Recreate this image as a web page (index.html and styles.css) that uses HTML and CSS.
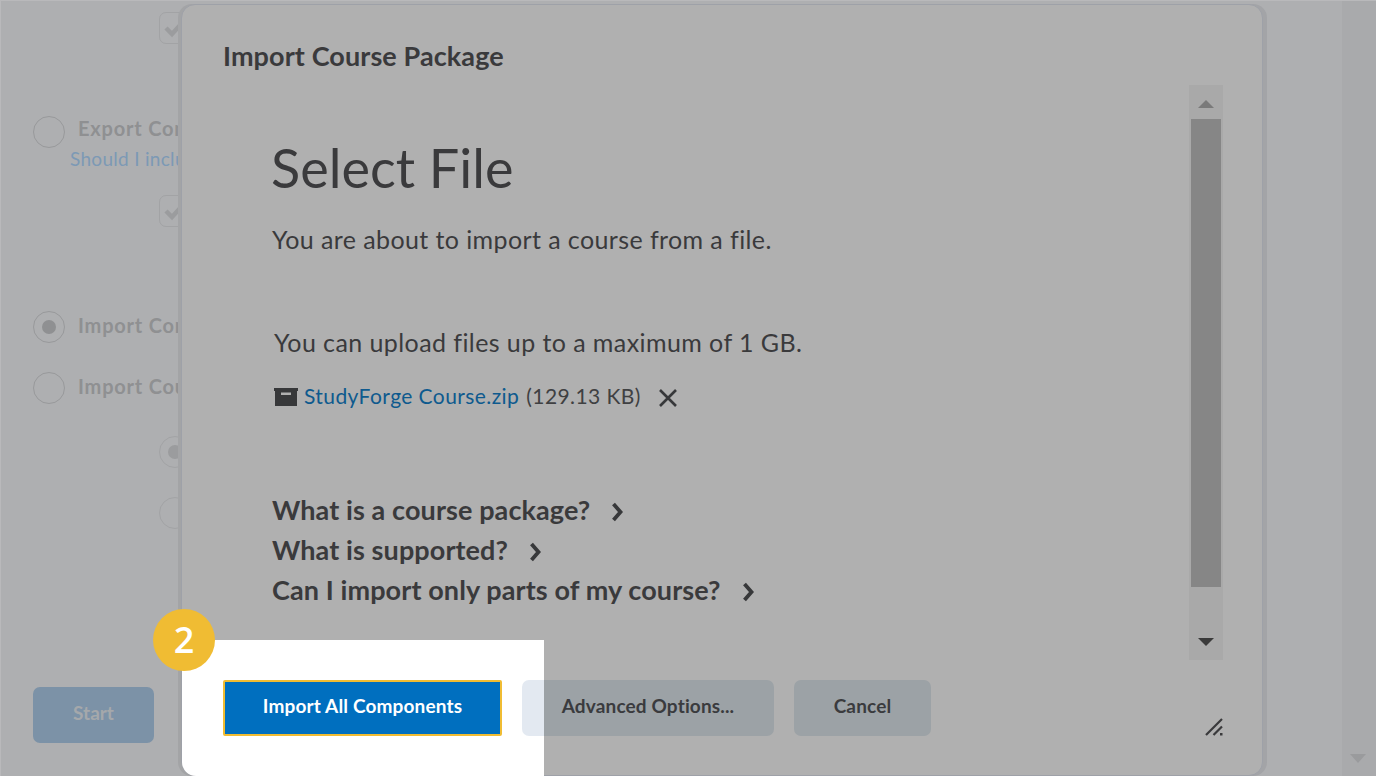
FILE: index.html
```html
<!DOCTYPE html>
<html lang="en">
<head>
<meta charset="utf-8">
<title>Import Course Package</title>
<link rel="stylesheet" href="styles.css">
</head>
<body>
<div class="page">
  <main class="under">
    <div class="check-row first"><span class="check"><svg viewBox="0 0 32 32" width="32" height="32"><path d="M7 16l6 6 11-12" fill="none" stroke="#9b9c9e" stroke-width="4.5"/></svg></span></div>
    <div class="radio-row export"><span class="radio"></span><span class="opt">Export Components</span></div>
    <a class="help">Should I include user data?</a>
    <div class="check-row second"><span class="check"><svg viewBox="0 0 32 32" width="32" height="32"><path d="M7 16l6 6 11-12" fill="none" stroke="#9b9c9e" stroke-width="4.5"/></svg></span></div>
    <div class="radio-row imp1"><span class="radio on"></span><span class="opt">Import Components</span></div>
    <div class="radio-row imp2"><span class="radio"></span><span class="opt">Import Course Package</span></div>
    <div class="sub-radio r1"><span class="radio on"></span></div>
    <div class="sub-radio r2"><span class="radio"></span></div>
    <button class="start">Start</button>
  </main>
  <div class="page-scroll"><svg class="page-arrow" viewBox="0 0 16 10" width="16" height="10"><path d="M0 0h16L8 9z" fill="#9a9b9d"/></svg></div>

  <section class="dialog">
    <div class="spot"></div>
    <h2 class="dlg-title">Import Course Package</h2>
    <div class="dlg-body">
      <div class="content">
        <h1 class="head">Select File</h1>
        <p class="intro">You are about to import a course from a file.</p>
        <p class="limit">You can upload files up to a maximum of 1 GB.</p>
        <div class="file">
          <svg class="box" viewBox="0 0 24 18" width="24" height="18"><path d="M0 0h24v3H0zM1 3h22v15H1z" fill="#37383a"/><rect x="7" y="4.500" width="10" height="2.500" fill="#b0b0b0"/></svg>
          <a class="fname">StudyForge Course.zip</a>
          <span class="fsize">(129.13 KB)</span>
          <svg class="x" viewBox="0 0 20 20" width="20" height="20"><path d="M2 2l16 16M18 2L2 18" stroke="#37383a" stroke-width="2.600" fill="none"/></svg>
        </div>
        <ul class="faq">
          <li>What is a course package?<svg viewBox="0 0 12 20" width="12" height="20"><path d="M2.500 2l7 8-7 8" fill="none" stroke="#37383a" stroke-width="3.800"/></svg></li>
          <li>What is supported?<svg viewBox="0 0 12 20" width="12" height="20"><path d="M2.500 2l7 8-7 8" fill="none" stroke="#37383a" stroke-width="3.800"/></svg></li>
          <li>Can I import only parts of my course?<svg viewBox="0 0 12 20" width="12" height="20"><path d="M2.500 2l7 8-7 8" fill="none" stroke="#37383a" stroke-width="3.800"/></svg></li>
        </ul>
      </div>
      <div class="scroll">
        <svg class="arr" viewBox="0 0 16 9" width="16" height="9"><path d="M8 0l8 8H0z" fill="#7a7a7a"/></svg>
        <div class="track"><div class="thumb"></div></div>
        <svg class="arr" viewBox="0 0 16 9" width="16" height="9"><path d="M0 0h16L8 8z" fill="#3a3a3a"/></svg>
      </div>
    </div>
    <footer class="foot">
      <button class="btn primary">Import All Components</button>
      <button class="btn adv">Advanced Options...</button>
      <button class="btn cancel">Cancel</button>
      <svg class="grip" viewBox="0 0 18 18" width="18" height="18"><path d="M1 17L17 1M8.500 17L17 8.500" stroke="#3a3a3c" stroke-width="2.200" fill="none"/><rect x="15" y="15" width="2.500" height="2.500" fill="#3a3a3c"/></svg>
    </footer>
  </section>
  <div class="badge">2</div>
</div>
</body>
</html>
```
FILE: styles.css
```css
* { box-sizing: border-box; }
html, body { margin: 0; padding: 0; }
body { font-family: Lato, "Open Sans", sans-serif; color: #3a3a3c; }
.page {
  position: relative;
  width: 1376px;
  height: 776px;
  overflow: hidden;
  background: #aeafb1;
  border-top: 1px solid #b9b9bb;
  border-left: 1px solid #b9b9bb;
  display: flex;
}
.under { flex: 1; display: flex; flex-direction: column; align-items: flex-start; padding-left: 32px; }
.page-scroll { width: 34px; background: #a9aaac; position: relative; }
.page-arrow { position: absolute; left: 8px; top: 753px; }

.check-row { padding-left: 126px; }
.check-row.first { margin-top: 11px; }
.check-row.second { margin-top: 24px; }
.check {
  display: block; width: 32px; height: 32px;
  border: 1px solid #a2a3a5; border-radius: 7px;
}
.check svg { display: block; margin: -1px; }
.radio-row { display: flex; align-items: center; gap: 13px; height: 32px; }
.radio-row.export { margin-top: 72px; }
.radio-row.imp1 { margin-top: 84px; }
.radio-row.imp2 { margin-top: 29px; }
.radio {
  display: flex; align-items: center; justify-content: center;
  width: 32px; height: 32px; border-radius: 50%;
  border: 1px solid #98999b;
}
.radio.on::after { content: ""; width: 14px; height: 14px; border-radius: 50%; background: #8f9092; }
.opt { font-size: 20px; line-height: 26px; font-weight: 700; letter-spacing: .8px; color: #8f9092; white-space: nowrap; margin-bottom: 5px; }
.export .opt { margin-bottom: 9px; }
.help { font-size: 19px; letter-spacing: .3px; color: #7c99b5; margin: -1px 0 0 37px; line-height: 24px; white-space: nowrap; }
.sub-radio { padding-left: 126px; }
.sub-radio.r1 { margin-top: 32px; }
.sub-radio.r2 { margin-top: 29px; }
.sub-radio .radio { border-color: #a2a3a5; }
.sub-radio .radio.on::after { background: #9b9c9e; }
.start {
  margin-top: 158px; width: 121px; height: 56px; padding: 0 0 5px;
  border: 0; border-radius: 7px; background: #7c92a7; color: #a5a8ab;
  font: 700 19px Lato, sans-serif;
}

.dialog {
  position: absolute; left: 180px; top: 3px;
  width: 1082px; height: 772px;
  background: #b0b0b0;
  border: 1px solid #9ea1a8;
  border-radius: 14px;
  box-shadow: 4px 0 0 #a3a4a7, -3px 0 0 #a3a4a6;
  display: flex; flex-direction: column;
}
.spot {
  position: absolute; left: 0; bottom: -1px;
  width: 362px; height: 136px;
  background: #fff; border-bottom-left-radius: 14px;
}
.dlg-title { margin: 0; padding: 32px 0 0 41px; font-size: 27px; font-weight: 700; line-height: 38px; letter-spacing: .1px; }
.dlg-body { display: flex; height: 575px; margin-top: 10px; padding-right: 39px; position: relative; }
.content { flex: 1; padding-left: 90px; }
.head { margin: 0 0 0 -1px; padding-top: 47px; font-size: 54px; font-weight: 400; line-height: 72px; color: #3a3a3c; }
.intro { margin: 17px 0 0; font-size: 25px; line-height: 36px; letter-spacing: .4px; }
.limit { margin: 67px 0 0 2px; font-size: 25px; line-height: 36px; letter-spacing: .42px; }
.file { display: flex; align-items: center; margin: 19px 0 0 2px; height: 36px; font-size: 21px; letter-spacing: .42px; }
.box { margin-right: 6px; }
.fname { color: #0e5a8e; margin-bottom: 4px; }
.fsize { margin-left: 7px; color: #3f4042; margin-bottom: 4px; }
.x { margin: 1px 0 0 17px; }
.faq { list-style: none; margin: 75px 0 0; padding: 0; font-size: 27px; font-weight: 700; line-height: 40px; letter-spacing: .1px; }
.faq li { display: flex; align-items: center; gap: 21px; }
.faq svg { margin-top: 3px; }
.scroll {
  width: 34px; height: 575px; background: #a9a9a9;
  display: flex; flex-direction: column; align-items: center; padding-top: 15px; padding-bottom: 13px;
}
.arr { flex: none; }
.track { flex: 1; width: 30px; margin: 10px 0 0; }
.thumb { width: 30px; height: 468px; background: #868686; }

.foot { position: relative; display: flex; align-items: flex-start; gap: 20px; padding: 20px 0 0 41px; }
.btn { height: 56px; padding: 0 0 5px; border: 0; border-radius: 7px; font: 700 19px Lato, sans-serif; letter-spacing: .15px; color: #3a3b3e; }
.primary { width: 279px; border-radius: 2px; background: #006fbf; border: 2px solid #f0bc33; color: #fff; }
.adv { width: 252px; background: linear-gradient(90deg, #e3e9f1 22px, #9ca2a6 22px); }
.cancel { width: 137px; background: #9ca2a6; }
.grip { position: absolute; left: 1023px; top: 58px; }

.badge {
  position: absolute; left: 152px; top: 608px;
  width: 62px; height: 62px; border-radius: 50%;
  background: #f0bc33; color: #fff;
  font: 600 36px/62px "Open Sans", sans-serif; text-align: center;
}
```
